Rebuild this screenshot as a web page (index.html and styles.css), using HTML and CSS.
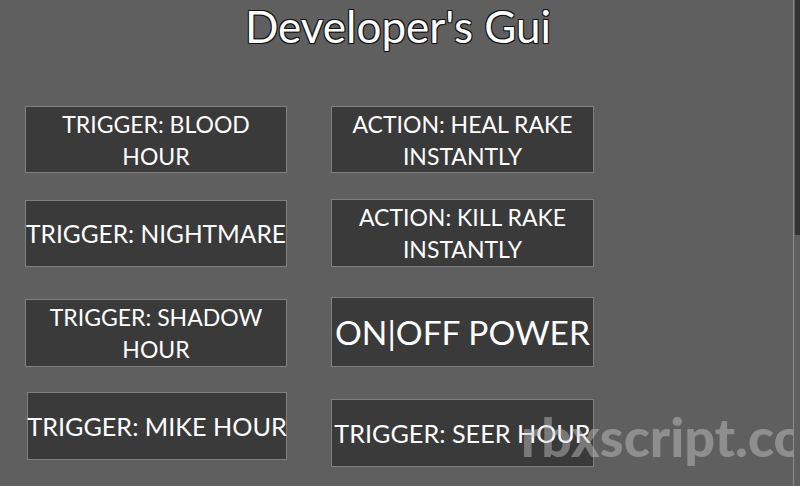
FILE: index.html
```html
<!DOCTYPE html>
<html>
<head>
<meta charset="utf-8">
<link rel="stylesheet" href="styles.css">
</head>
<body>
<div class="frame">
  <h1 class="title">Developer's Gui</h1>
  <div class="grid">
    <div class="col col-left">
      <div class="btn b1">TRIGGER: BLOOD<br>HOUR</div>
      <div class="btn b2 single nm">TRIGGER: NIGHTMARE</div>
      <div class="btn b3">TRIGGER: SHADOW<br>HOUR</div>
      <div class="btn b4 single">TRIGGER: MIKE HOUR</div>
    </div>
    <div class="col col-right">
      <div class="btn r1">ACTION: HEAL RAKE<br>INSTANTLY</div>
      <div class="btn r2">ACTION: KILL RAKE<br>INSTANTLY</div>
      <div class="btn r3 big">ON|OFF POWER</div>
      <div class="btn r4 single">TRIGGER: SEER HOUR</div>
    </div>
  </div>
  <div class="watermark">rbxscript.co</div>
  <div class="scrollbar"><div class="thumb"></div></div>
</div>
</body>
</html>
```
FILE: styles.css
```css
html, body {
  margin: 0;
  padding: 0;
  background: #5f5f5f;
  overflow: hidden;
}
.frame {
  position: relative;
  width: 800px;
  height: 486px;
  background: #5f5f5f;
  font-family: "Lato", "Liberation Sans", sans-serif;
  color: #ffffff;
}
.title {
  margin: 0;
  padding-top: 2px;
  text-align: center;
  font-weight: 400;
  font-size: 44px;
  line-height: 48px;
  padding-right: 4px;
  text-shadow: -1px -1px 0 #111, 1px -1px 0 #111, -1px 1px 0 #111, 1px 1px 0 #111;
}
.grid {
  display: flex;
  gap: 44px;
  padding-left: 25px;
  margin-top: 56px;
}
.col {
  display: flex;
  flex-direction: column;
}
.col-left { width: 262px; }
.col-right { width: 263px; }
.btn {
  box-sizing: border-box;
  height: 67px;
  border: 1px solid #808080;
  background: #3a3a3a;
  display: flex;
  align-items: center;
  justify-content: center;
  text-align: center;
  font-size: 23px;
  line-height: 32px;
  white-space: nowrap;
}
.single { font-size: 25.2px; }
.nm { font-size: 24.5px; }
.b2 { margin-top: 27px; }
.b3 { margin-top: 32px; height: 68px; }
.b4 { margin-top: 25px; height: 68px; margin-left: 2px; }
.r2 { margin-top: 26px; height: 68px; }
.r3 { margin-top: 30px; height: 70px; }
.r4 { margin-top: 32px; height: 68px; }
.big { font-size: 33.5px; }
.scrollbar {
  position: absolute;
  top: 0;
  right: 0;
  width: 6px;
  height: 486px;
  border-left: 1px solid #8c8c8c;
  background: transparent;
}
.thumb {
  margin-left: 1px;
  height: 235px;
  background: #333333;
}
.watermark {
  position: absolute;
  left: 521px;
  top: 404px;
  width: 272px;
  overflow: hidden;
  font-family: "Lato", "DejaVu Sans", sans-serif;
  font-weight: 900;
  font-size: 54px;
  color: rgba(200, 200, 200, 0.45);
  white-space: nowrap;
  pointer-events: none;
}
```
